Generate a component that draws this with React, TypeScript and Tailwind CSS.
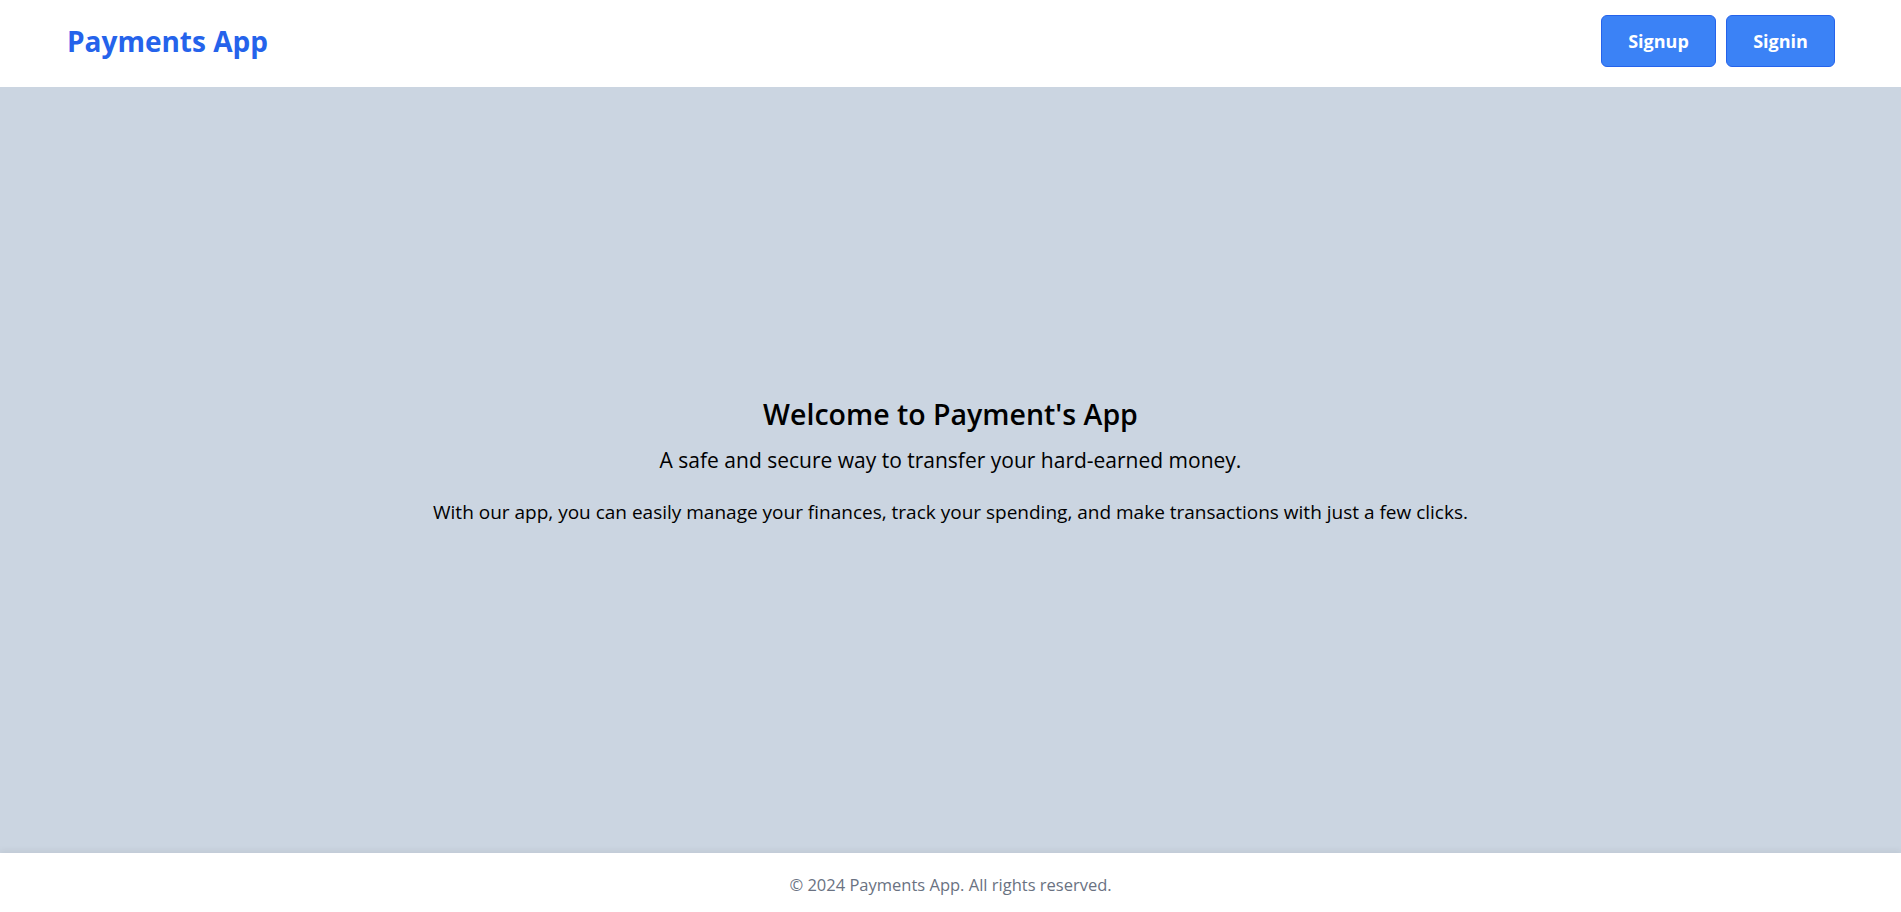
export default function App() {
  return (
    <div
      className="flex flex-col h-screen"
      style={{ fontFamily: '"Open Sans", "Noto Sans", sans-serif' }}
    >
      <header className="flex items-center justify-between h-[87px] pt-[15px] pb-[20px] pl-[67px] pr-[66px] bg-white shrink-0">
        <h1 className="text-[28px] font-bold text-[#2563eb]">Payments App</h1>
        <div className="flex gap-[10px]">
          <button className="h-[52px] w-[115px] rounded-md border border-[#2563eb] bg-[#3b82f6] text-white text-lg font-bold">
            Signup
          </button>
          <button className="h-[52px] w-[109px] rounded-md border border-[#2563eb] bg-[#3b82f6] text-white text-lg font-bold">
            Signin
          </button>
        </div>
      </header>
      <main className="flex-1 flex flex-col items-center justify-center pb-[18px] bg-[#cbd5e1] text-black text-center">
        <h2 className="text-[28.5px] leading-9 font-semibold">
          Welcome to Payment's App
        </h2>
        <p className="mt-[14px] text-[21px] leading-7">
          A safe and secure way to transfer your hard-earned money.
        </p>
        <p className="mt-6 text-[19px] leading-7">
          With our app, you can easily manage your finances, track your
          spending, and make transactions with just a few clicks.
        </p>
      </main>
      <footer className="h-[59px] shrink-0 flex items-center justify-center pt-[6px] bg-white text-[16.5px] text-gray-500 shadow-[0_-3px_6px_rgba(0,0,0,0.05)]">
        © 2024 Payments App. All rights reserved.
      </footer>
    </div>
  );
}
